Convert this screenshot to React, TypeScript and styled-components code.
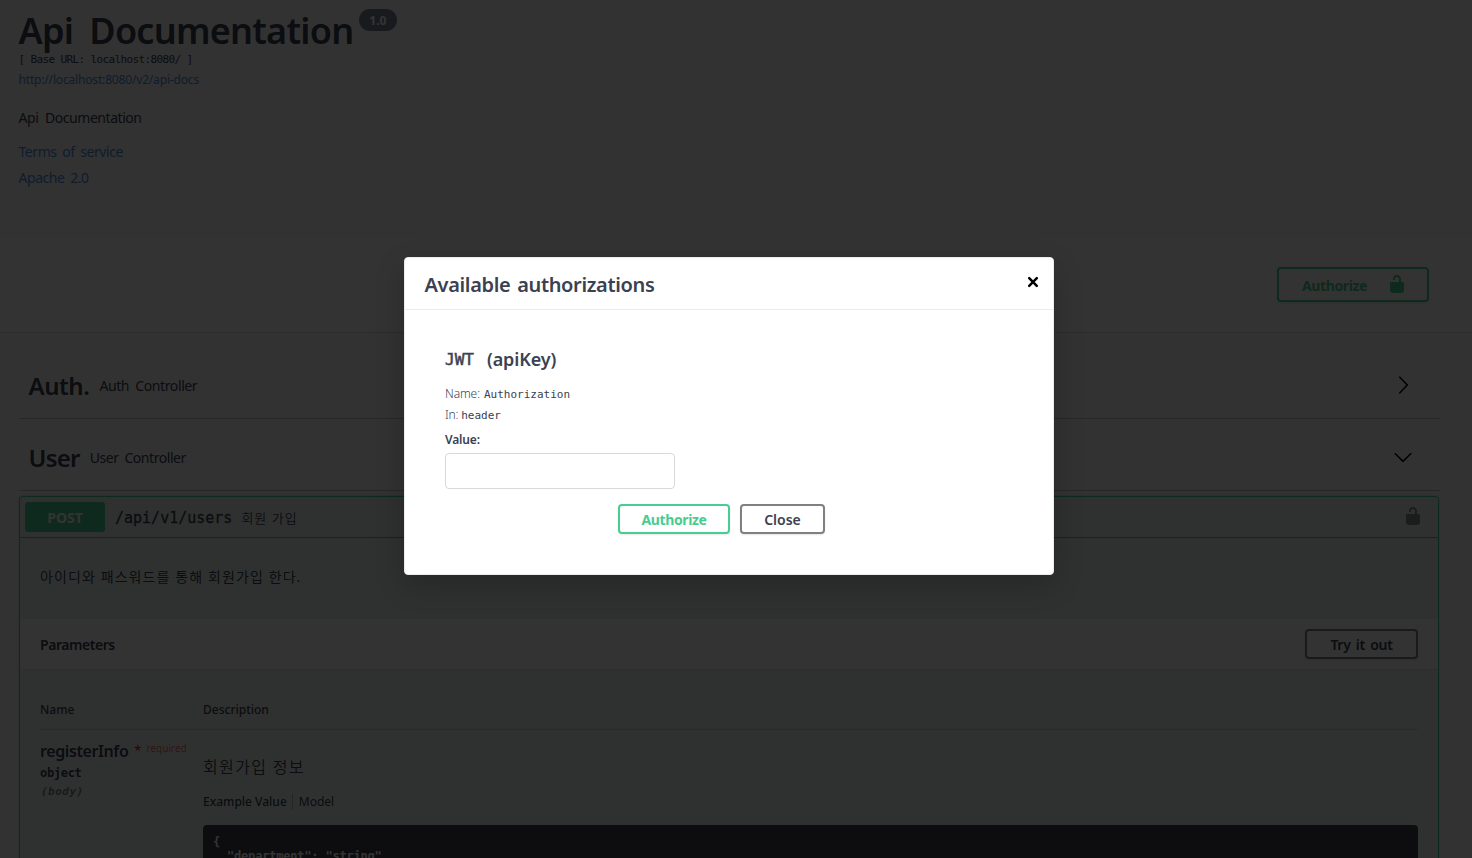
import React from 'react';
import styled, { createGlobalStyle } from 'styled-components';

const SANS = '"Noto Sans", "Noto Sans CJK KR", sans-serif';
const MONO = '"DejaVu Sans Mono", "Noto Sans CJK KR", monospace';

const Global = createGlobalStyle`
  * { box-sizing: border-box; }
  html, body { margin: 0; height: 858px; overflow: hidden; background: #fafafa; }
  body { font-family: ${SANS}; color: #3b4151; }
`;

interface TypeProps {
  $size: number;
  $line: number;
  $track?: number;
  $word?: number;
  $weight?: number;
  $color?: string;
  $mono?: boolean;
  $firm?: number;
}

const Label = styled.span<TypeProps>`
  display: block;
  flex: none;
  white-space: pre;
  font-family: ${p => (p.$mono ? MONO : SANS)};
  font-size: ${p => p.$size}px;
  line-height: ${p => p.$line}px;
  letter-spacing: ${p => p.$track ?? 0}px;
  word-spacing: ${p => p.$word ?? 0}px;
  font-weight: ${p => p.$weight ?? 400};
  color: ${p => p.$color ?? '#3b4151'};
  -webkit-text-stroke: ${p => p.$firm ?? 0}px currentColor;
`;

const Page = styled.div`
  height: 858px;
  overflow: hidden;
  display: flex;
  flex-direction: column;
`;

const Info = styled.header`
  flex: none;
  height: 237px;
  padding: 6px 19px 0 18.5px;
`;

const TitleRow = styled.div`
  display: flex;
  align-items: flex-start;
  gap: 5.5px;
  height: 46px;
`;

const Version = styled.span`
  display: flex;
  align-items: center;
  justify-content: center;
  width: 38px;
  height: 22px;
  margin-top: 3px;
  padding-top: 2px;
  border-radius: 11px;
  background: #7d8492;
`;

const Intro = styled.div`
  padding-top: 12px;
`;

const Links = styled.div`
  padding-top: 7px;
  display: flex;
  flex-direction: column;
`;

const Scheme = styled.section`
  flex: none;
  height: 96px;
  padding: 30px 43px 0 0;
  display: flex;
  justify-content: flex-end;
  align-items: flex-start;
  background: #fff;
  border-bottom: 1px solid #dcdcdc;
`;

const Button = styled.button<{ $w: number; $h: number; $tone?: string }>`
  flex: none;
  display: flex;
  align-items: center;
  justify-content: center;
  width: ${p => p.$w}px;
  height: ${p => p.$h}px;
  padding: 2px 0 0;
  border: 2px solid ${p => p.$tone ?? 'gray'};
  border-radius: 4px;
  background: transparent;
  box-shadow: 0 1px 2px rgba(0, 0, 0, 0.1);
`;

const AuthorizeIcon = styled.span`
  display: flex;
  margin: -4px -3px 0 20px;
`;

const Tag = styled.div`
  flex: none;
  display: flex;
  align-items: center;
  gap: 10px;
  height: 72px;
  margin: 0 32px 0 19px;
  padding: 6px 27px 0 9.5px;
  border-bottom: 1px solid rgba(59, 65, 81, 0.3);
`;

const Arrow = styled.span`
  display: flex;
  margin: -1px 0 0 auto;
`;

const Tags = styled.section`
  flex: none;
  padding-top: 14px;
`;

const Operation = styled.article`
  flex: none;
  height: 500px;
  margin: 5px 33px 0 19px;
  border: 1px solid #49cc90;
  border-radius: 4px;
  background: #ecf6f1;
  box-shadow: 0 0 3px rgba(0, 0, 0, 0.19);
`;

const Summary = styled.div`
  display: flex;
  align-items: center;
  height: 41px;
  padding: 0 15px 0 5px;
  border-bottom: 1px solid #49cc90;
`;

const Method = styled.span`
  display: flex;
  align-items: center;
  justify-content: center;
  width: 80px;
  height: 30px;
  padding-top: 2px;
  margin-right: 10px;
  border-radius: 3px;
  background: #49cc90;
`;

const SummaryText = styled.span`
  display: flex;
  gap: 9px;
  padding-top: 2px;
`;

const SummaryLock = styled.span`
  display: flex;
  margin: -2px 0 0 auto;
`;

const Description = styled.div`
  height: 81px;
  padding: 29px 19px 0 20px;
`;

const SectionHead = styled.div`
  display: flex;
  align-items: center;
  justify-content: space-between;
  height: 51px;
  padding: 0 20px 0 20px;
  background: #fdfdfd;
  border-bottom: 1px solid #e0e5e2;
`;

const Params = styled.div`
  display: grid;
  grid-template-columns: 163px 1fr;
  padding: 30px 20px 0 20px;
`;

const HeadCell = styled.div`
  height: 30px;
  border-bottom: 1px solid #cbd3d1;
`;

const NameCell = styled.div`
  padding-top: 10px;
`;

const ParamName = styled.div`
  display: flex;
  align-items: flex-start;
  height: 23px;
`;

const Required = styled.span`
  display: flex;
  gap: 5px;
  margin-left: 6px;
  padding-top: 1px;
`;

const Italic = styled.em`
  display: block;
  font: italic 700 11px/18px ${MONO};
  letter-spacing: 0.5px;
  color: #808080;
  padding-left: 1px;
`;

const DetailCell = styled.div`
  padding-top: 24px;
`;

const ModelTabs = styled.div`
  display: flex;
  align-items: center;
  margin: 13px 0 14px;
`;

const Divider = styled.span`
  width: 1px;
  height: 16px;
  margin: 0 6px 0 5px;
  background: #b5bdbb;
`;

const Code = styled.div`
  height: 200px;
  padding: 10px;
  border-radius: 4px;
  background: #41444e;
`;

const Backdrop = styled.div`
  position: absolute;
  inset: 0;
  display: flex;
  align-items: flex-start;
  justify-content: center;
  padding: 257px 14px 0 0;
  background: rgba(0, 0, 0, 0.8);
`;

const Dialog = styled.div`
  width: 650px;
  height: 318px;
  border: 1px solid #ebebeb;
  border-radius: 4px;
  background: #fff;
  box-shadow: 0 10px 30px rgba(0, 0, 0, 0.2);
`;

const DialogHead = styled.div`
  display: flex;
  align-items: center;
  justify-content: space-between;
  height: 52px;
  padding: 2px 14px 0 19.5px;
  border-bottom: 1px solid #ebebeb;
`;

const CloseMark = styled.span`
  display: flex;
  margin-top: -5px;
`;

const DialogBody = styled.div`
  padding: 36px 40px 0;
`;

const Line = styled.div<{ $h: number; $gap?: number; $top?: number }>`
  display: flex;
  align-items: center;
  gap: ${p => p.$gap ?? 0}px;
  height: ${p => p.$h}px;
  margin-top: ${p => p.$top ?? 0}px;
`;

const Drop = styled.span`
  padding-top: 2px;
`;

const Field = styled.input`
  display: block;
  width: 230px;
  height: 36px;
  border: 1px solid #d9d9d9;
  border-radius: 4px;
  background: #fff;
`;

const Actions = styled.div`
  display: flex;
  gap: 10px;
  padding: 15px 0 0 173px;
`;

const Lock = ({ color }: { color: string }) => (
  <svg width="20" height="20" viewBox="0 0 20 20">
    <path
      fill={color}
      d="M15.8 8H14V5.6C14 2.703 12.665 1 10 1 7.334 1 6 2.703 6 5.6V6h2v-.801C8 3.754 8.797 3 10 3c1.203 0 2 .754 2 2.199V8H4c-.553 0-1 .646-1 1.199V17c0 .549.428 1.139.951 1.307l1.197.387C5.672 18.861 6.55 19 7.1 19h5.8c.549 0 1.428-.139 1.951-.307l1.196-.387c.524-.167.953-.757.953-1.306V9.199C17 8.646 16.352 8 15.8 8z"
    />
  </svg>
);

const Chevron = ({ down }: { down?: boolean }) => (
  <svg width="20" height="20" viewBox="0 0 20 20">
    <path
      fill="#000"
      d={
        down
          ? 'M17.418 6.109c.272-.268.709-.268.979 0s.271.701 0 .969l-7.908 7.83c-.27.268-.707.268-.979 0l-7.908-7.83c-.27-.268-.27-.701 0-.969.271-.268.709-.268.979 0L10 13.25l7.418-7.141z'
          : 'M13.25 10L6.109 2.58c-.268-.27-.268-.707 0-.979.268-.27.701-.27.969 0l7.83 7.908c.268.271.268.709 0 .979l-7.83 7.908c-.268.271-.701.27-.969 0-.268-.269-.268-.707 0-.979L13.25 10z'
      }
    />
  </svg>
);

const Cross = () => (
  <svg width="12" height="12" viewBox="0 0 12 12">
    <path d="M2.2 2.2L9.8 9.8M9.8 2.2L2.2 9.8" stroke="#000" strokeWidth="2.5" strokeLinecap="round" />
  </svg>
);

export default function App() {
  return (
    <>
      <Global />
      <Page>
        <Info>
          <TitleRow>
            <Label $size={36} $line={50} $weight={600} $track={-0.75} $word={7.5}>Api Documentation</Label>
            <Version><Label $size={12} $line={22} $weight={700} $color="#fff">1.0</Label></Version>
          </TitleRow>
          <Label $size={11} $line={16} $mono $track={-0.62}>[ Base URL: localhost:8080/ ]</Label>
          <Label $size={12} $line={24} $track={-0.17} $color="#4990e2">http://localhost:8080/v2/api-docs</Label>
          <Intro>
            <Label $size={14} $line={28} $track={-0.45} $word={3.5}>Api Documentation</Label>
          </Intro>
          <Links>
            <Label $size={14} $line={26} $track={-0.45} $word={2.5} $color="#4990e2">Terms of service</Label>
            <Label $size={14} $line={26} $track={-0.45} $word={2.5} $color="#4990e2">Apache 2.0</Label>
          </Links>
        </Info>
        <Scheme>
          <Button $w={152} $h={35} $tone="#49cc90">
            <Label $size={14} $line={20} $weight={700} $track={-0.4} $color="#49cc90">Authorize</Label>
            <AuthorizeIcon><Lock color="#49cc90" /></AuthorizeIcon>
          </Button>
        </Scheme>
        <Tags>
          <Tag>
            <Label $size={24} $line={34} $weight={600} $track={-0.45}>Auth.</Label>
            <Label $size={14} $line={20} $track={-0.4} $word={3}>Auth Controller</Label>
            <Arrow><Chevron /></Arrow>
          </Tag>
          <Tag>
            <Label $size={24} $line={34} $weight={600} $track={-0.75}>User</Label>
            <Label $size={14} $line={20} $track={-0.45} $word={2.7}>User Controller</Label>
            <Arrow><Chevron down /></Arrow>
          </Tag>
        </Tags>
        <Operation>
          <Summary>
            <Method><Label $size={14} $line={20} $weight={700} $color="#fff">POST</Label></Method>
            <SummaryText>
              <Label $size={15} $line={20} $firm={0.3} $mono>/api/v1/users</Label>
              <Label $size={13} $line={20} $weight={350} $track={1}>회원 가입</Label>
            </SummaryText>
            <SummaryLock><Lock color="#84908b" /></SummaryLock>
          </Summary>
          <Description>
            <Label $size={14} $line={20} $track={1.1}>아이디와 패스워드를 통해 회원가입 한다.</Label>
          </Description>
          <SectionHead>
            <Drop><Label $size={14} $line={20} $weight={600} $track={-0.45}>Parameters</Label></Drop>
            <Button $w={113} $h={30}>
              <Label $size={14} $line={20} $weight={600} $track={-0.3} $word={2}>Try it out</Label>
            </Button>
          </SectionHead>
          <Params>
            <HeadCell><Label $size={12} $line={20} $weight={500}>Name</Label></HeadCell>
            <HeadCell><Label $size={12} $line={20} $weight={500}>Description</Label></HeadCell>
            <NameCell>
              <ParamName>
                <Label $size={16} $line={22} $weight={600} $track={-0.4}>registerInfo</Label>
                <Required>
                  <Label $size={13} $line={18} $color="#ff0000">*</Label>
                  <Label $size={10} $line={14} $color="rgba(255, 0, 0, 0.6)">required</Label>
                </Required>
              </ParamName>
              <Label $size={12} $line={20} $weight={700} $track={-0.3} $mono>object</Label>
              <Italic>(body)</Italic>
            </NameCell>
            <DetailCell>
              <Label $size={16} $line={26} $weight={350} $track={1.35}>회원가입 정보</Label>
              <ModelTabs>
                <Label $size={12} $line={18} $weight={500}>Example Value</Label>
                <Divider />
                <Label $size={12} $line={18}>Model</Label>
              </ModelTabs>
              <Code>
                <Label $size={12} $line={14} $weight={700} $track={-0.2} $mono $color="#fff">{'{'}</Label>
                <Label $size={12} $line={14} $weight={700} $track={-0.2} $mono $color="#fff">{'  "department": "string"'}</Label>
              </Code>
            </DetailCell>
          </Params>
        </Operation>
      </Page>
      <Backdrop>
        <Dialog>
          <DialogHead>
            <Label $size={20} $line={28} $weight={600} $track={-0.35} $word={2}>Available authorizations</Label>
            <CloseMark><Cross /></CloseMark>
          </DialogHead>
          <DialogBody>
            <Line $h={26} $gap={13}>
              <Drop><Label $size={16} $line={26} $firm={0.5} $mono>JWT</Label></Drop>
              <Label $size={18} $line={26} $weight={600} $track={-0.1}>(apiKey)</Label>
            </Line>
            <Line $h={21} $gap={4} $top={11}>
              <Label $size={12} $line={20} $weight={300} $track={-0.1}>Name:</Label>
              <Drop><Label $size={11} $line={20} $mono>Authorization</Label></Drop>
            </Line>
            <Line $h={21} $gap={3}>
              <Label $size={12} $line={20} $weight={300} $track={-0.2}>In:</Label>
              <Drop><Label $size={11} $line={20} $mono>header</Label></Drop>
            </Line>
            <Line $h={28}>
              <Drop><Label $size={12} $line={20} $weight={600} $track={-0.15}>Value:</Label></Drop>
            </Line>
            <Field />
            <Actions>
              <Button $w={112} $h={30} $tone="#49cc90">
                <Label $size={14} $line={20} $weight={700} $track={-0.4} $color="#49cc90">Authorize</Label>
              </Button>
              <Button $w={85} $h={30}>
                <Label $size={14} $line={20} $weight={600}>Close</Label>
              </Button>
            </Actions>
          </DialogBody>
        </Dialog>
      </Backdrop>
    </>
  );
}
